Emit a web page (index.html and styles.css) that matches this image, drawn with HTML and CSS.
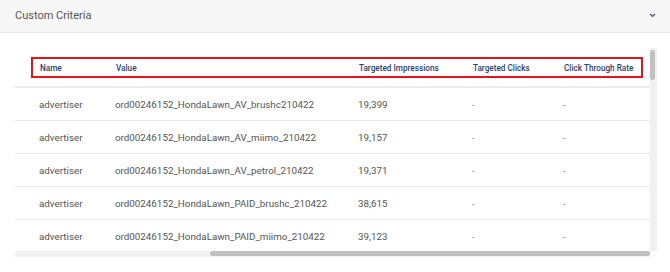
FILE: index.html
```html
<!DOCTYPE html>
<html>
<head>
<meta charset="utf-8">
<link rel="stylesheet" href="styles.css">
</head>
<body>
<div class="panel">
  <div class="panel-header">
    <span class="panel-title">Custom Criteria</span>
    <svg class="chevron" width="7" height="5" viewBox="0 0 7 5"><polyline points="1,1 3.5,3.5 6,1" fill="none" stroke="#44506a" stroke-width="1.2"/></svg>
  </div>
  <div class="panel-body">
    <div class="scroller">
      <div class="viewport">
        <div class="thead">
          <div class="head-box grid">
            <span>Name</span><span>Value</span><span>Targeted Impressions</span><span>Targeted Clicks</span><span>Click Through Rate</span>
          </div>
        </div>
        <div class="row grid"><span>advertiser</span><span>ord00246152_HondaLawn_AV_brushc210422</span><span>19,399</span><span class="dash">-</span><span class="dash">-</span></div>
        <div class="row grid"><span>advertiser</span><span>ord00246152_HondaLawn_AV_miimo_210422</span><span>19,157</span><span class="dash">-</span><span class="dash">-</span></div>
        <div class="row grid"><span>advertiser</span><span>ord00246152_HondaLawn_AV_petrol_210422</span><span>19,371</span><span class="dash">-</span><span class="dash">-</span></div>
        <div class="row grid"><span>advertiser</span><span>ord00246152_HondaLawn_PAID_brushc_210422</span><span>38,615</span><span class="dash">-</span><span class="dash">-</span></div>
        <div class="row grid last"><span>advertiser</span><span>ord00246152_HondaLawn_PAID_miimo_210422</span><span>39,123</span><span class="dash">-</span><span class="dash">-</span></div>
      </div>
      <div class="vscroll"><div class="vthumb"></div></div>
    </div>
    <div class="hscroll"><div class="hthumb"></div></div>
  </div>
</div>
</body>
</html>
```

FILE: styles.css
```css
* { box-sizing: border-box; }
html, body { margin: 0; padding: 0; background: #fff; }
body { font-family: Roboto, "Liberation Sans", sans-serif; width: 670px; height: 272px; overflow: hidden; }

.panel-header {
  height: 33px;
  background: #f7f7f7;
  border-bottom: 1px solid #e6e6e6;
  display: flex;
  align-items: center;
  justify-content: space-between;
  padding: 0 15px 2px 15px;
}
.panel-title { font-size: 11px; color: #555; }
.chevron { display: block; margin-right: -1px; }

.panel-body { padding: 15px 0 0 15px; }
.scroller { display: flex; width: 642px; height: 203px; }
.viewport { width: 635px; overflow: hidden; }
.vscroll { width: 7px; background: #f1f1f1; padding: 2px 1px 0 0; }
.vthumb { width: 5px; height: 30px; background: #c1c1c1; border-radius: 3px; }
.hscroll { width: 635px; height: 6px; background: #f1f1f1; padding-left: 195px; }
.hthumb { height: 5px; background: #c1c1c1; border-radius: 3px; }

.grid {
  display: grid;
  grid-template-columns: 76px 243px 114px 91px 1fr;
  align-items: center;
  white-space: nowrap;
}
.thead { padding: 9px 7px 8px 16px; border-bottom: 2px solid #ececec; }
.head-box {
  height: 21px;
  border: 2px solid #e3141b;
  padding-left: 7px;
  font-size: 8.2px;
  font-weight: 500;
  color: #2b4170;
}
.row {
  height: 33px;
  border-bottom: 1px solid #e8e8e8;
  padding-left: 24px;
  font-size: 9.8px;
  color: #555;
}
.row.last { border-bottom: none; }
.dash { color: #888; }
```
